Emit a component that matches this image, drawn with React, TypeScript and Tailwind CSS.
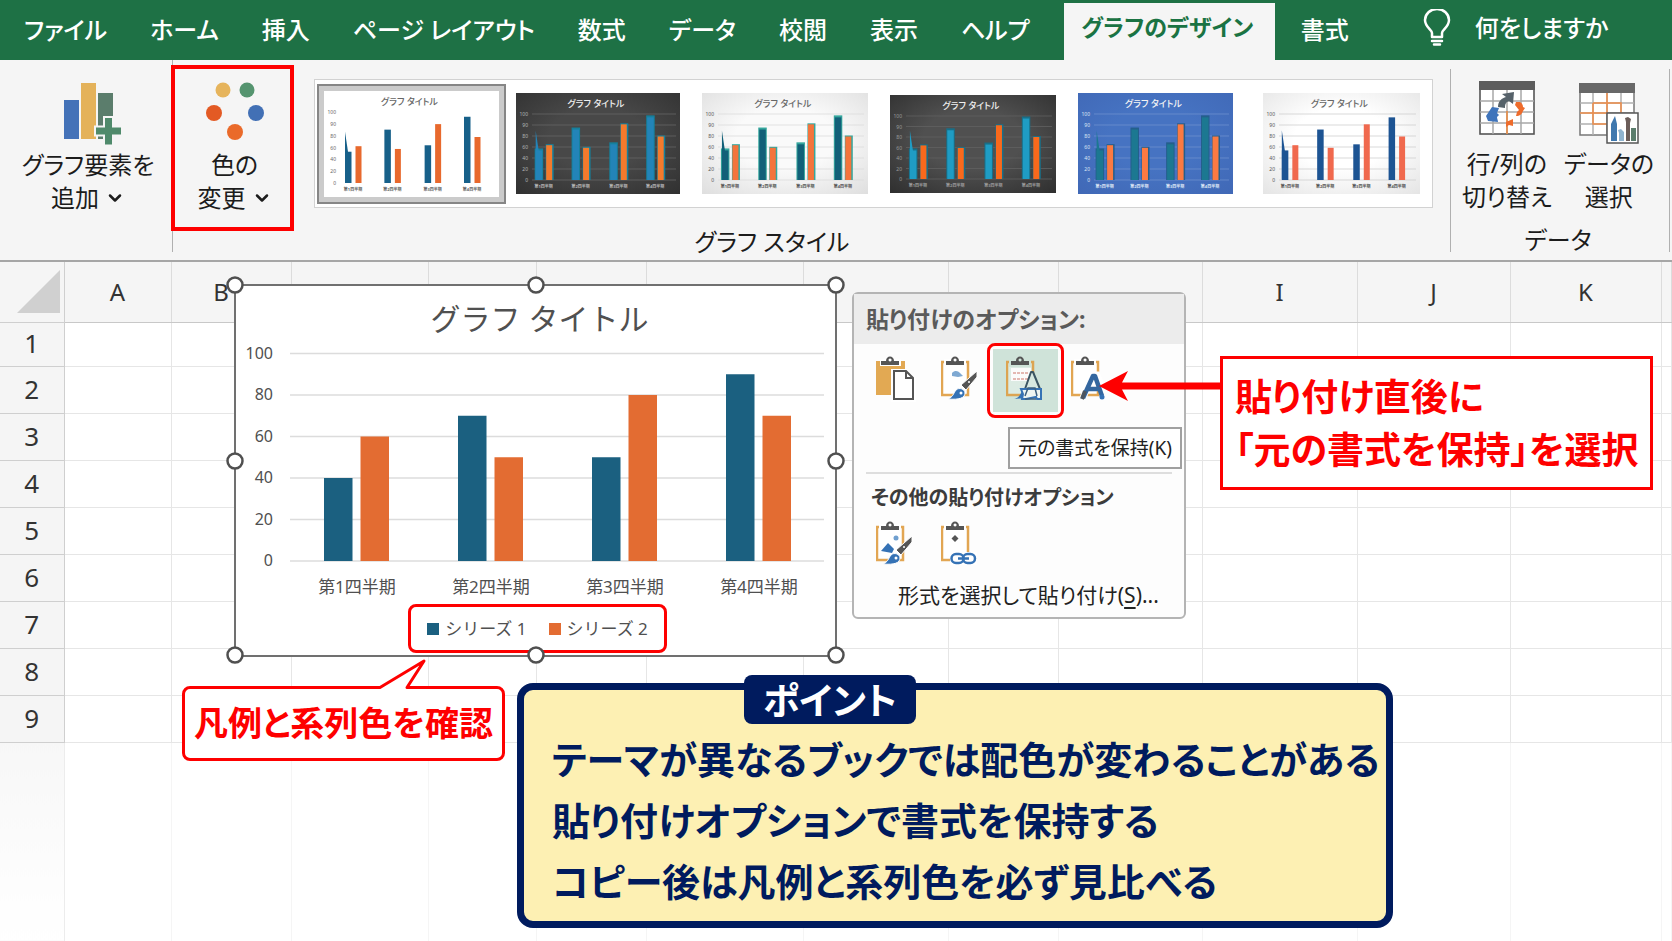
import React from 'react';
import { ChevronDown } from 'lucide-react';

const SERIES_1 = [40, 70, 50, 90];
const SERIES_2 = [60, 50, 80, 70];
const QUARTERS = ['第1四半期', '第2四半期', '第3四半期', '第4四半期'];

const TABS = ['ファイル', 'ホーム', '挿入', 'ページ レイアウト', '数式', 'データ', '校閲', '表示', 'ヘルプ'];

// Column widths of the sheet; only some headings are visible behind the chart and the menu
const COLUMNS = [
  { name: 'A', className: 'w-[107px]' },
  { name: 'B', className: 'w-[120px] pr-5' },
  { name: '', className: 'w-[137px]' },
  { name: '', className: 'w-[108px]' },
  { name: '', className: 'w-[110px]' },
  { name: '', className: 'w-[157px]' },
  { name: '', className: 'w-[145px]' },
  { name: '', className: 'w-[110px]' },
  { name: '', className: 'w-[144px]' },
  { name: 'I', className: 'w-[155px]' },
  { name: 'J', className: 'w-[153px]' },
  { name: 'K', className: 'w-[151px]' },
  { name: '', className: '' },
];

const ROWS = [1, 2, 3, 4, 5, 6, 7, 8, 9];

interface Theme {
  name: string;
  width: number;
  height: number;
  from: string;
  to: string;
  title: string;
  label: string;
  grid: string;
  first: string;
  second: string;
  glow?: string;
}

const THEMES: Theme[] = [
  { name: 'スタイル 1', width: 175, height: 106, from: '#ffffff', to: '#ffffff', title: '#666666', label: '#666666', grid: 'none', first: '#176089', second: '#e8692d' },
  { name: 'スタイル 2', width: 164, height: 101, from: '#484848', to: '#303030', title: '#f0f0f0', label: '#b5b5b5', grid: '#666666', first: '#2384b8', second: '#f47a2c', glow: '#15809c' },
  { name: 'スタイル 3', width: 166, height: 101, from: '#fafafa', to: '#dedede', title: '#666666', label: '#555555', grid: '#dcdcdc', first: '#126078', second: '#f4743c', glow: '#35a79d' },
  { name: 'スタイル 4', width: 166, height: 98, from: '#505050', to: '#2e2e2e', title: '#f0f0f0', label: '#9a9a9a', grid: '#616161', first: '#1f9cc4', second: '#f9691c', glow: '#186f88' },
  { name: 'スタイル 5', width: 155, height: 101, from: '#4673c2', to: '#4068b6', title: '#f4f4f4', label: '#dde6f5', grid: '#6d8fce', first: '#1c7891', second: '#fb7a42', glow: '#245f8c' },
  { name: 'スタイル 6', width: 157, height: 101, from: '#ffffff', to: '#e4e4e4', title: '#666666', label: '#555555', grid: '#cfcfcf', first: '#1d5493', second: '#f0694e' },
];

const StyleThumbnail: React.FC<{ theme: Theme; id: string }> = ({ theme, id }) => {
  const { width, height } = theme;
  const base = height - 14;
  const groups = [0.12, 0.345, 0.575, 0.8];
  // Bar heights are fractions of the space above the baseline
  const first = [0.34, 0.58, 0.41, 0.72];
  const second = [0.4, 0.37, 0.64, 0.5];
  return (
    <svg width={width} height={height} viewBox={`0 0 ${width} ${height}`} aria-hidden="true">
      <defs>
        <radialGradient id={id} cx="50%" cy="45%" r="75%">
          <stop offset="0.4" stopColor={theme.from} />
          <stop offset="1" stopColor={theme.to} />
        </radialGradient>
      </defs>
      <rect width={width} height={height} fill={`url(#${id})`} />
      <text x={width / 2 - 2} y="14" fontSize="9" fontWeight="500" textAnchor="middle" fill={theme.title}>グラフ タイトル</text>
      {[0, 20, 40, 60, 80, 90, 100].map((v, i) => {
        const y = base - (i / 6) * (base - 21);
        return (
          <g key={v}>
            <path d={`M16 ${y}H${width - 4}`} stroke={theme.grid} strokeWidth="0.8" />
            <text x="12" y={y + 2} fontSize="5" textAnchor="end" fill={theme.label}>{v}</text>
          </g>
        );
      })}
      {groups.map((g, i) => {
        const x = g * width;
        const a = first[i] * base;
        const b = second[i] * base;
        return (
          <g key={g}>
            {theme.glow && <rect x={x - 1} y={base - a - 2} width="8.500" height={a + 2} fill={theme.glow} />}
            {theme.glow && <rect x={x + 10} y={base - b - 1} width="8" height={b + 1} fill={theme.glow} />}
            {i === 0 && <path d={`M${x} ${base}V${base - a - 20}L${x + 3} ${base - a}Z`} fill={theme.first} />}
            <rect x={x} y={base - a} width="6.500" height={a} fill={theme.first} />
            <rect x={x + 10.500} y={base - b} width="6" height={b} fill={theme.second} />
            <text x={x + 8} y={base + 8} fontSize="4" fontWeight="700" textAnchor="middle" fill={theme.label}>{QUARTERS[i]}</text>
          </g>
        );
      })}
    </svg>
  );
};

const AddElementIcon = () => (
  <svg width="70" height="64" viewBox="-10 0 70 64" aria-hidden="true">
    <rect x="1" y="18" width="15" height="39" fill="#4472b8" />
    <rect x="18" y="1" width="15" height="56" fill="#e4b25a" />
    <rect x="35" y="11" width="15" height="46" fill="#5b7d6c" />
    <path d="M41 35h9v9.500h9v9h-9v10h-9v-10h-9v-9h9z" fill="#4f8a6b" stroke="#f5f5f5" strokeWidth="2" />
  </svg>
);

const ColorsIcon = () => (
  <svg width="60" height="64" viewBox="0 0 60 64" aria-hidden="true">
    <circle cx="18" cy="8" r="7.500" fill="#e6b45c" />
    <circle cx="42" cy="8" r="7.500" fill="#55946f" />
    <circle cx="9" cy="31" r="8" fill="#e35a24" />
    <circle cx="51" cy="31" r="8" fill="#4270b5" />
    <circle cx="30" cy="50" r="8" fill="#ea6a2a" />
  </svg>
);

const SwitchIcon = () => (
  <svg width="60" height="64" viewBox="0 0 60 64" aria-hidden="true">
    <rect x="3" y="1" width="54" height="52" fill="#fff" stroke="#555" strokeWidth="1.600" />
    <rect x="2" y="0" width="56" height="9" fill="#5c5c5c" />
    <path d="M16 9v44M30 9v44M44 9v44M3 20h54M3 31h54M3 42h54" stroke="#a8a8a8" strokeWidth="1.500" />
    <path d="M21 26c0-6 4-9 8-10l-4-3 12-2-1 12-4-3c-3 1-4 3-4 7z" fill="#56626a" />
    <path d="M9 35l6-9 7 1-2 5 2 2-2 2c0 2 1 3 1 5l-10-1z" fill="#3f74bb" />
    <path d="M39 21l4 0c2 1 3 3 3 5l2 1-2 3c-1 3-3 5-7 5l1-4 2-2-4-5z" fill="#ee6c2c" />
    <path d="M30 30v23" stroke="#ee8a3c" strokeWidth="1.500" />
    <path d="M29 41l7-3v7l-4-1-3 2z" fill="#ee6c2c" />
  </svg>
);

const SelectDataIcon = () => (
  <svg width="60" height="64" viewBox="0 0 60 64" aria-hidden="true">
    <rect x="1" y="3" width="54" height="51" fill="#fff" stroke="#777" strokeWidth="1.500" />
    <rect x="0" y="2" width="56" height="10" fill="#686868" />
    <path d="M14 12v42M28 12v42M42 12v42M1 22h54M1 32h54M1 43h54" stroke="#b0b0b0" strokeWidth="1.500" />
    <path d="M28 12v20M14 22h28v11M14 22v21h14M1 32h27" fill="none" stroke="#ee8d4a" strokeWidth="1.500" />
    <rect x="28" y="32" width="31" height="30" fill="#fff" stroke="#555" strokeWidth="1.500" />
    <path d="M32 60V43l4-8 2 8v17z" fill="#3f78ae" />
    <path d="M40 60v-8l-1-3 3-1 3 3v9z" fill="#8fb3ce" />
    <path d="M47 60V41l-1-4 3-1 3 2-1 4v18z" fill="#6b5d59" />
    <rect x="52" y="47" width="5" height="13" fill="#5b7d6c" />
  </svg>
);

const BulbIcon = () => (
  <svg width="28" height="38" viewBox="0 0 28 38" fill="none" stroke="#fff" strokeWidth="2.500" strokeLinejoin="round" aria-hidden="true">
    <path d="M9 28v-4c0-3-7-6-7-13a12 11 0 0 1 24 0c0 7-7 10-7 13v4z" />
    <path d="M9 32h10M11 35.500h6" strokeLinecap="round" />
  </svg>
);

const Clip = () => (
  <path d="M5 9V5h5c0-6 8-6 8 0h5v4zM14 2.500a1.500 1.500 0 1 0 0.100 0z" fill="#555" fillRule="evenodd" />
);

const Board = () => (
  <>
    <rect x="1" y="6" width="26" height="33" fill="#fff" stroke="#e2a653" strokeWidth="2.500" />
    <rect x="3" y="3" width="22" height="8" fill="#fff" />
    <Clip />
  </>
);

const Brush = () => (
  <>
    <path d="M36 15v6L25 34l-5-5z" fill="#555" stroke="#fff" strokeWidth="1" />
    <circle cx="28" cy="26" r="1" fill="#fff" />
    <path d="M7 43c5-2 5-5 8-9 3-3 9-1 9 3 0 5-6 7-17 6z" fill="#3572b5" stroke="#fff" strokeWidth="1" />
    <circle cx="20" cy="37" r="1.500" fill="#fff" />
  </>
);

const PasteIcon: React.FC<{ kind: string }> = ({ kind }) => (
  <svg width="40" height="46" viewBox="0 0 40 46" aria-hidden="true">
    {kind === 'paste' && (
      <>
        <path d="M0 5h29v34H0z" fill="#e2a953" />
        <path d="M4 3h21v7H4z" fill="#fff" />
        <Clip />
        <path d="M17 15h13l8 7v22H17z" fill="#fff" stroke="#fff" strokeWidth="4" />
        <path d="M18 15h12l7 7v21H18zM30 15v7h7" fill="#fff" stroke="#555" strokeWidth="2" />
      </>
    )}
    {kind === 'theme' && (
      <>
        <Board />
        <path d="M11 17c3-3 6-2 8 0l3 3-5 1-6-1z" fill="#7fa9d2" />
        <Brush />
      </>
    )}
    {kind === 'source' && (
      <>
        <rect x="1" y="6" width="26" height="33" fill="#dcebe3" stroke="#dca452" strokeWidth="2.500" />
        <rect x="3" y="3" width="22" height="8" fill="#cfe3d9" />
        <Clip />
        <path d="M5 12h20v13H5z" fill="#fbfbfb" />
        <path d="M7 17h16M7 23h16" stroke="#dda39b" strokeWidth="1.500" strokeDasharray="3 1" />
        <path d="M8 43c5-1 6-4 8-8l7-1v8z" fill="#3572b5" />
        <path d="M19 33l6-17h2l7 17z" fill="#d7e8e0" stroke="#3b5563" strokeWidth="2" strokeLinejoin="round" />
        <path d="M15 33h20v10h-4l-1-2-10 2h-4l1-5z" fill="#eef5f2" stroke="#3572b5" strokeWidth="2" />
        <path d="M19 40l3-8h7l2 8M19 43h11" fill="none" stroke="#3b5f80" strokeWidth="1.500" />
      </>
    )}
    {kind === 'text' && (
      <>
        <Board />
        <path d="M12 42l9-23h5l7 18" fill="none" stroke="#fff" strokeWidth="7" />
        <path d="M12 42l10-22h2l7 20M16 33h12" fill="none" stroke="#34679f" strokeWidth="4.500" strokeLinejoin="round" />
        <path d="M11 43l3-8" stroke="#4d5660" strokeWidth="4" />
        <circle cx="31" cy="41" r="2.500" fill="#3572b5" />
      </>
    )}
    {kind === 'picture' && (
      <>
        <Board />
        <circle cx="20" cy="17" r="2.500" fill="#6f9fcf" />
        <path d="M5 30l7-8 6 6-2 4z" fill="#3572b5" />
        <Brush />
      </>
    )}
    {kind === 'link' && (
      <>
        <Board />
        <path d="M14 14l3.500 3.500L14 21l-3.500-3.500z" fill="#555" />
        <rect x="9" y="31" width="27" height="13" fill="#fff" />
        <rect x="10.500" y="33" width="12" height="9" rx="4.500" fill="none" stroke="#3572b5" strokeWidth="2.500" />
        <rect x="22" y="33" width="12" height="9" rx="4.500" fill="none" stroke="#3572b5" strokeWidth="2.500" />
        <path d="M17 37.500h11" stroke="#3572b5" strokeWidth="2.500" />
      </>
    )}
  </svg>
);

const RibbonTabs = () => (
  <nav className="flex h-[60px] items-stretch bg-[#1e7145] text-2xl text-white">
    <div className="flex items-center gap-[43px] pl-6">
      {TABS.map((tab) => (
        <button key={tab} className="font-medium whitespace-nowrap">{tab}</button>
      ))}
    </div>
    <button className="mt-[3px] ml-[34px] w-[211px] bg-[#f5f5f5] pr-1 pb-2 text-[23px] font-bold whitespace-nowrap text-[#1a7343]">
      グラフのデザイン
    </button>
    <button className="ml-[26px] font-medium">書式</button>
    <button className="ml-[74px] flex items-center gap-6 pb-1 font-medium whitespace-nowrap">
      <BulbIcon />
      何をしますか
    </button>
  </nav>
);

const RibbonButton: React.FC<{ icon: React.ReactNode; lines: string[]; menu?: boolean }> = ({ icon, lines, menu }) => (
  <button className="flex flex-col items-center text-2xl leading-[33px] whitespace-nowrap">
    {icon}
    <span className="mt-0.5">{lines[0]}</span>
    <span className="flex items-center gap-1.5">
      {lines[1]}
      {menu && <ChevronDown size={20} strokeWidth={3} />}
    </span>
  </button>
);

const Ribbon = () => (
  <div className="flex h-[202px] border-b-2 border-[#a6a6a6] bg-[#f5f5f5] text-[#1c1c1c]">
    <div className="flex w-[172px] justify-center pt-[22px] pl-1">
      <RibbonButton icon={<AddElementIcon />} lines={['グラフ要素を', '追加']} menu />
    </div>
    <div className="relative mb-2 flex w-[124px] justify-center border-l border-[#b0b0b0] pt-[22px]">
      <RibbonButton icon={<ColorsIcon />} lines={['色の', '変更']} menu />
      <div className="pointer-events-none absolute top-[5px] right-0.5 -left-0.5 h-[166px] border-4 border-[#fe0000]" />
    </div>
    <div className="flex flex-col items-start pt-[19px] pl-[18px]">
      <div className="flex h-[129px] items-center gap-[22px] border border-[#d2d2d2] bg-white pr-3 pl-0.5">
        {THEMES.map((theme, i) => (
          <button
            key={theme.name}
            aria-label={theme.name}
            className={i === 0 ? '-mr-3 border-2 border-[#868686] bg-[#cbcbcb] p-[5px]' : 'last:ml-2'}
          >
            <StyleThumbnail theme={theme} id={`style-${i}`} />
          </button>
        ))}
      </div>
      <span className="w-[916px] pt-[17px] text-center text-2xl leading-[33px]">グラフ スタイル</span>
    </div>
    <div className="mt-[9px] mr-[2px] mb-2 ml-auto flex w-[220px] flex-col items-center border-x border-[#b0b0b0] pt-3 pr-1">
      <div className="flex gap-3">
        <RibbonButton icon={<SwitchIcon />} lines={['行/列の', '切り替え']} />
        <RibbonButton icon={<SelectDataIcon />} lines={['データの', '選択']} />
      </div>
      <span className="mt-2.5 text-2xl leading-[33px]">データ</span>
    </div>
  </div>
);

const Sheet = () => (
  <table className="w-full table-fixed border-collapse text-[#333]">
    <thead>
      <tr className="h-[60px] bg-[#f5f5f5] text-2xl">
        <th className="w-16 border-r border-b border-[#cfcfcf]">
          <svg className="ml-[17px]" width="43" height="43" viewBox="0 0 43 43" aria-hidden="true">
            <path d="M43 0v43H0z" fill="#d0d0d0" />
          </svg>
        </th>
        {COLUMNS.map((col, i) => (
          <th key={i} className={`border-r border-b border-r-[#dcdcdc] border-b-[#c8c8c8] font-normal ${col.className}`}>
            {col.name}
          </th>
        ))}
      </tr>
    </thead>
    <tbody>
      {ROWS.map((row) => (
        <tr key={row} className="h-[47px] first:h-[44px]">
          <th className="border-r border-b border-[#cfcfcf] bg-[#f5f5f5] pb-0.5 text-[26px] leading-8 font-normal">{row}</th>
          {COLUMNS.map((_, i) => (
            <td key={i} className="border-r border-b border-[#e6e6e6] bg-white" />
          ))}
        </tr>
      ))}
      <tr className="h-[199px]">
        <th className="border-r border-[#ececec] bg-linear-to-b from-[#f7f7f7] to-white" />
        {COLUMNS.map((_, i) => (
          <td key={i} className="border-r border-[#f5f5f5] bg-white" />
        ))}
      </tr>
    </tbody>
  </table>
);

const HANDLES = [
  [0, 0], [301, 0], [601, 0],
  [0, 176], [601, 176],
  [0, 370], [301, 370], [601, 370],
];

const ChartObject = () => (
  <section className="absolute top-[22px] left-[234px] w-[603px] border-2 border-[#707070] bg-white text-[#505050] [font-feature-settings:normal]">
    <h2 className="pt-3 pl-2 text-center text-[30px] leading-[42px]">グラフ タイトル</h2>
    <svg className="block" width="599" height="262" viewBox="0 0 599 262" role="img" aria-label="四半期別の棒グラフ">
      {[100, 80, 60, 40, 20, 0].map((v, i) => {
        const y = 13.500 + i * 41.500;
        return (
          <g key={v}>
            <path d={`M54 ${y}H588`} stroke="#dcdcdc" strokeWidth="1.500" />
            <text x="37" y={y + 5} fontSize="16" textAnchor="end" fill="#505050">{v}</text>
          </g>
        );
      })}
      {QUARTERS.map((q, i) => {
        const x = 88 + i * 134;
        return (
          <g key={q}>
            <rect x={x} y={221 - SERIES_1[i] * 2.075} width="28.500" height={SERIES_1[i] * 2.075} fill="#1b6080" />
            <rect x={x + 36.500} y={221 - SERIES_2[i] * 2.075} width="28.500" height={SERIES_2[i] * 2.075} fill="#e36c32" />
            <text x={x + 33} y="253" fontSize="17" textAnchor="middle" fill="#505050">{q}</text>
          </g>
        );
      })}
    </svg>
    <div className="mt-0.5 mr-[168px] mb-0.5 ml-[172px] flex h-[49px] items-center justify-center gap-[22px] rounded-lg border-3 border-[#fe0000] text-[17px]">
      <span className="flex items-center gap-1.5"><i className="size-3 bg-[#1b6080]" />シリーズ 1</span>
      <span className="flex items-center gap-1.5"><i className="size-3 bg-[#e36c32]" />シリーズ 2</span>
    </div>
    <svg className="pointer-events-none absolute -top-[11px] -left-[11px]" width="621" height="390" viewBox="-10 -10 621 390" aria-hidden="true">
      {HANDLES.map(([x, y]) => (
        <circle key={`${x}-${y}`} cx={x} cy={y} r="7.500" fill="#fff" stroke="#505050" strokeWidth="2.500" />
      ))}
    </svg>
  </section>
);

const PasteButton: React.FC<{ kind: string; label: string }> = ({ kind, label }) => (
  <button aria-label={label} className="flex h-[63px] w-[65px] items-center justify-center pb-1">
    <PasteIcon kind={kind} />
  </button>
);

const PasteMenu = () => (
  <div role="menu" className="absolute top-[30px] left-[852px] w-[334px] rounded-md border-2 border-[#b4b4b4] bg-[#fdfdfd] pb-1 text-[#222]">
    <h3 className="bg-[#ececec] px-3 text-[23px] leading-[50px] font-bold text-[#5a5a5a]">貼り付けのオプション:</h3>
    <div className="mt-[5px] flex pl-[9px]">
      <PasteButton kind="paste" label="貼り付け" />
      <PasteButton kind="theme" label="貼り付け先のテーマを使用" />
      <div className="relative bg-[#cfe3d9]">
        <PasteButton kind="source" label="元の書式を保持" />
        <div className="pointer-events-none absolute -inset-[6px] rounded-lg border-3 border-[#fe0000]" />
        <div role="tooltip" className="absolute top-[78px] left-[15px] z-10 border-2 border-[#a0a0a0] bg-white px-2 text-[19px] leading-[38px] whitespace-nowrap">
          元の書式を保持(K)
        </div>
      </div>
      <PasteButton kind="text" label="テキストのみ保持" />
    </div>
    <hr className="mx-3 mt-[60px] border-t-2 border-[#dedede]" />
    <h4 className="mt-2 pl-[17px] text-xl leading-8 font-bold text-[#3c3c3c]">その他の貼り付けオプション</h4>
    <div className="flex pl-[9px]">
      <PasteButton kind="picture" label="図" />
      <PasteButton kind="link" label="リンク" />
    </div>
    <button role="menuitem" className="block pl-11 text-[21px] leading-9 whitespace-nowrap">
      形式を選択して貼り付け(<u className="underline-offset-4">S</u>)...
    </button>
  </div>
);

const App: React.FC = () => (
  <div className="flex min-h-screen flex-col bg-white font-['Noto_Sans','Noto_Sans_CJK_JP',sans-serif] [font-feature-settings:'palt']" lang="ja">
    <RibbonTabs />
    <Ribbon />
    <main className="relative flex-1 overflow-hidden">
      <Sheet />
      <ChartObject />
      <PasteMenu />

      {/* Note on the paste option */}
      <svg className="absolute top-[108px] left-[1099px]" width="123" height="32" viewBox="0 0 123 32" aria-hidden="true">
        <path d="M0 16L29 1l-6 11.500h100v7H23L29 31z" fill="#fe0000" />
      </svg>
      <p className="absolute top-[94px] left-[1220px] border-3 border-[#fe0000] bg-white px-3 py-[11px] text-[37px] leading-[53px] font-bold whitespace-nowrap text-[#fe0000]">
        貼り付け直後に<br />「元の書式を保持」を選択
      </p>

      {/* Note on the legend */}
      <p className="absolute top-[424px] left-[182px] rounded-lg border-3 border-[#fe0000] bg-white px-[9px] text-[34px] leading-[69px] font-bold whitespace-nowrap text-[#fe0000]">
        凡例と系列色を確認
      </p>
      <svg className="absolute top-[396px] left-[376px]" width="52" height="32" viewBox="0 0 52 32" aria-hidden="true">
        <path d="M4 29.500L48 3 32 29.500V32H4z" fill="#fff" />
        <path d="M2 29.500h2L48 3 31 29.500h4" fill="none" stroke="#fe0000" strokeWidth="3" strokeLinejoin="round" />
      </svg>

      <aside className="absolute top-[421px] left-[517px] w-[876px] rounded-2xl border-[7px] border-[#001b5e] bg-[#fdf0b3] pt-[39px] pb-[9px] pl-7 text-[#001b5e]">
        <h2 className="absolute -top-[15px] left-[220px] rounded-lg bg-[#001b5e] px-[19px] pt-0.5 text-[37px] leading-[47px] font-bold text-white">ポイント</h2>
        <ul className="text-[38px] leading-[61px] font-bold whitespace-nowrap">
          <li>テーマが異なるブックでは配色が変わることがある</li>
          <li>貼り付けオプションで書式を保持する</li>
          <li>コピー後は凡例と系列色を必ず見比べる</li>
        </ul>
      </aside>
    </main>
  </div>
);

export default App;
